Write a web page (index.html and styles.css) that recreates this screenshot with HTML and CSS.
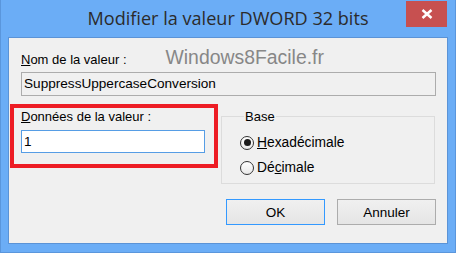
FILE: index.html
```html
<!DOCTYPE html>
<html lang="fr">
<head>
    <meta charset="UTF-8">
    <title>Modifier la valeur DWORD 32 bits</title>
    <link rel="stylesheet" href="styles.css">
</head>
<body>

<div class="window">
    <div class="title-bar">
        <span></span>
        <h1 class="title">Modifier la valeur DWORD 32 bits</h1>
        <button class="close-btn" aria-label="Fermer">
            <svg width="12" height="10" viewBox="0 0 12 10">
                <path d="M1.5 1 L10.5 9 M10.5 1 L1.5 9" stroke="#fff" stroke-width="2.5" fill="none"/>
            </svg>
        </button>
    </div>

    <div class="client">
        <div class="name-row">
            <label class="label"><u>N</u>om de la valeur :</label>
            <span class="watermark">Windows8Facile.fr</span>
        </div>
        <div class="field readonly">SuppressUppercaseConversion</div>

        <div class="middle">
            <div class="data-box">
                <label class="label"><u>D</u>onnées de la valeur :</label>
                <div class="field focused">1</div>
            </div>

            <fieldset class="base-group">
                <legend>Base</legend>
                <div class="radio-row">
                    <span class="radio checked"></span>
                    <span><u>H</u>exadécimale</span>
                </div>
                <div class="radio-row">
                    <span class="radio"></span>
                    <span>Dé<u>c</u>imale</span>
                </div>
            </fieldset>
        </div>

        <div class="buttons">
            <button class="btn default">OK</button>
            <button class="btn">Annuler</button>
        </div>
    </div>
</div>

</body>
</html>
```

FILE: styles.css
```css
body {
    margin: 0;
    background-color: #6badf6;
    font-family: 'Liberation Sans', Arial, sans-serif;
}

.window {
    width: 456px;
    height: 253px;
    box-sizing: border-box;
    background-color: #6badf6; /* Win8 active frame */
    border: 1px solid #5a96dc;
    border-top: none;
    padding: 0 7px 0 7px;
}

.title-bar {
    display: grid;
    grid-template-columns: 1fr auto 1fr;
    align-items: start;
    height: 37px;
}

.title {
    margin: 0;
    padding-top: 6px;
    font-family: 'Open Sans', sans-serif;
    font-weight: normal;
    font-size: 18.1px;
    color: #2b2b2b;
    white-space: nowrap;
}

.close-btn {
    justify-self: end;
    width: 41px;
    height: 26px;
    margin-top: 1px;
    margin-right: 1px;
    background-color: #c75050;
    border: none;
    padding: 0;
    display: flex;
    align-items: center;
    justify-content: center;
}

.client {
    background-color: #f0f0f0;
    border: 1px solid #5b93d6;
    height: 207px;
    box-sizing: border-box;
    padding: 0 11px 0 12px;
}

.label {
    font-size: 13px;
    color: #000;
}

.name-row {
    display: flex;
    align-items: baseline;
    height: 34px;
}

.name-row .label {
    padding-top: 14px;
}

.watermark {
    margin-left: 39px;
    font-size: 19.4px;
    color: #878787;
}

.field {
    box-sizing: border-box;
    height: 24px;
    font-size: 13px;
    line-height: 22px;
    padding: 0 2px;
    border: 1px solid #acacac;
    color: #000;
}

.field.readonly {
    background-color: #f0f0f0;
    font-size: 13.6px;
}

.field.focused {
    background-color: #fff;
    border-color: #569de5;
    height: 23px;
    line-height: 21px;
    font-size: 13.5px;
}

.middle {
    display: grid;
    grid-template-columns: 208px 214px;
    column-gap: 3px;
    margin-top: 8px;
    margin-left: -11px;
}

.data-box {
    border: 4px solid #ed1c24;
    padding: 1px 9px 11px 7px;
    height: 64px;
    box-sizing: border-box;
}

.data-box .label {
    display: block;
    height: 15px;
    line-height: 15px;
    margin-bottom: 6px;
}

.base-group {
    margin: 5px 0 0 0;
    padding: 6px 0 0 18px;
    border: 1px solid #dcdcdc;
    height: 75px;
    box-sizing: border-box;
    font-size: 13px;
}

.base-group legend {
    padding: 0 1px 0 1px;
    margin-left: 4px;
    line-height: 15px;
}

.radio-row {
    display: flex;
    align-items: center;
    gap: 3px;
    height: 25px;
    font-size: 13.8px;
}

.radio {
    width: 12px;
    height: 12px;
    border: 1px solid #333;
    border-radius: 50%;
    background: linear-gradient(#fff, #e9e9e9);
    display: flex;
    align-items: center;
    justify-content: center;
}

.radio.checked::after {
    content: "";
    width: 7px;
    height: 7px;
    border-radius: 50%;
    background-color: #1a1a1a;
}

.buttons {
    display: flex;
    justify-content: flex-end;
    gap: 12px;
    margin-top: 15px;
}

.btn {
    width: 99px;
    height: 26px;
    box-sizing: border-box;
    font-family: 'Liberation Sans', Arial, sans-serif;
    font-size: 13.5px;
    color: #000;
    background: linear-gradient(#f0f0f0, #e5e5e5);
    border: 1px solid #acacac;
}

.btn.default {
    border-color: #3399ff;
}
```
